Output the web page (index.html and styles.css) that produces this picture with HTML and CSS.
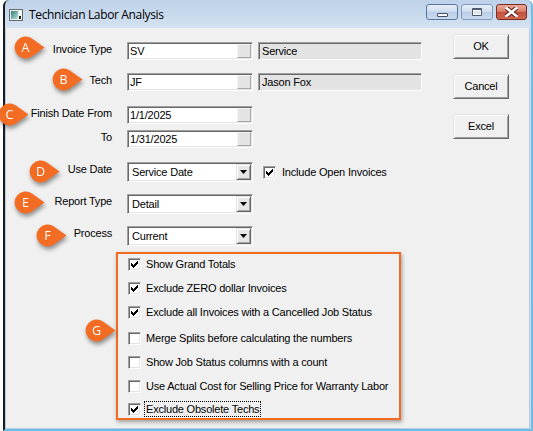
FILE: index.html
```html
<!DOCTYPE html>
<html>
<head>
<meta charset="utf-8">
<title>Technician Labor Analysis</title>
<link rel="stylesheet" href="styles.css">
</head>
<body>
<div class="window">
  <div class="titlebar">
    <svg class="app-icon" width="14" height="12" viewBox="0 0 14 12">
      <defs>
        <linearGradient id="ig" x1="0" y1="0" x2="1" y2="1">
          <stop offset="0" stop-color="#2f7f74"/>
          <stop offset="1" stop-color="#bfe3d9"/>
        </linearGradient>
      </defs>
      <rect x="0.5" y="0.5" width="13" height="11" fill="#e8eef4" stroke="#6b6b6b"/>
      <rect x="2" y="2" width="7" height="8" fill="url(#ig)"/>
      <rect x="10" y="2" width="2" height="5" fill="#ffffff"/>
      <rect x="10" y="7" width="2" height="3" fill="#202020"/>
    </svg>
    <span class="title">Technician Labor Analysis</span>
    <div class="caption-buttons">
      <span class="cbtn cmin"><i class="glyph-min"></i></span>
      <span class="cbtn cmax"><i class="glyph-max"></i></span>
      <span class="cbtn cclose">
        <svg width="13" height="10" viewBox="0 0 13 10">
          <path d="M1.5 1 L11.5 9 M11.5 1 L1.5 9" stroke="#5a1a12" stroke-width="4.5" stroke-linecap="square"/>
          <path d="M1.5 1 L11.5 9 M11.5 1 L1.5 9" stroke="#ffffff" stroke-width="2.5" stroke-linecap="square"/>
        </svg>
      </span>
    </div>
  </div>
  <div class="client">
    <div class="form">
      <div class="row r-invoice">
        <span class="lbl">Invoice Type</span>
        <div class="edit"><span class="txt">SV</span><span class="ell"></span></div>
        <div class="desc">Service</div>
      </div>
      <div class="row r-tech">
        <span class="lbl">Tech</span>
        <div class="edit"><span class="txt">JF</span><span class="ell"></span></div>
        <div class="desc">Jason Fox</div>
      </div>
      <div class="row r-from">
        <span class="lbl">Finish Date From</span>
        <div class="edit"><span class="txt">1/1/2025</span><span class="ell"></span></div>
      </div>
      <div class="row r-to">
        <span class="lbl">To</span>
        <div class="edit"><span class="txt">1/31/2025</span><span class="ell"></span></div>
      </div>
      <div class="row r-combo r-usedate">
        <span class="lbl">Use Date</span>
        <div class="combo"><span class="txt">Service Date</span><span class="arrow"><svg width="7" height="4" viewBox="0 0 7 4"><path d="M0 0h7L3.5 4z" fill="#000"/></svg></span></div>
        <div class="inline-check">
          <span class="cb"><svg viewBox="0 0 9 9" width="9" height="9"><path class="tick" d="M7 1h1v1h-1z M6 2h2v1h-2z M1 3h1v1h-1z M5 3h3v1h-3z M1 4h2v1h-2z M4 4h3v1h-3z M1 5h5v1h-5z M2 6h3v1h-3z M3 7h1v1h-1z"/></svg></span>
          <span class="cb-text">Include Open Invoices</span>
        </div>
      </div>
      <div class="row r-combo r-report">
        <span class="lbl">Report Type</span>
        <div class="combo"><span class="txt">Detail</span><span class="arrow"><svg width="7" height="4" viewBox="0 0 7 4"><path d="M0 0h7L3.5 4z" fill="#000"/></svg></span></div>
      </div>
      <div class="row r-combo r-process">
        <span class="lbl">Process</span>
        <div class="combo"><span class="txt">Current</span><span class="arrow"><svg width="7" height="4" viewBox="0 0 7 4"><path d="M0 0h7L3.5 4z" fill="#000"/></svg></span></div>
      </div>
      <div class="options">
        <div class="opt"><span class="cb"><svg viewBox="0 0 9 9" width="9" height="9"><path class="tick" d="M7 1h1v1h-1z M6 2h2v1h-2z M1 3h1v1h-1z M5 3h3v1h-3z M1 4h2v1h-2z M4 4h3v1h-3z M1 5h5v1h-5z M2 6h3v1h-3z M3 7h1v1h-1z"/></svg></span><span class="opt-text">Show Grand Totals</span></div>
        <div class="opt"><span class="cb"><svg viewBox="0 0 9 9" width="9" height="9"><path class="tick" d="M7 1h1v1h-1z M6 2h2v1h-2z M1 3h1v1h-1z M5 3h3v1h-3z M1 4h2v1h-2z M4 4h3v1h-3z M1 5h5v1h-5z M2 6h3v1h-3z M3 7h1v1h-1z"/></svg></span><span class="opt-text">Exclude ZERO dollar Invoices</span></div>
        <div class="opt"><span class="cb"><svg viewBox="0 0 9 9" width="9" height="9"><path class="tick" d="M7 1h1v1h-1z M6 2h2v1h-2z M1 3h1v1h-1z M5 3h3v1h-3z M1 4h2v1h-2z M4 4h3v1h-3z M1 5h5v1h-5z M2 6h3v1h-3z M3 7h1v1h-1z"/></svg></span><span class="opt-text">Exclude all Invoices with a Cancelled Job Status</span></div>
        <div class="opt opt-gap"><span class="cb"></span><span class="opt-text">Merge Splits before calculating the numbers</span></div>
        <div class="opt"><span class="cb"></span><span class="opt-text">Show Job Status columns with a count</span></div>
        <div class="opt"><span class="cb"></span><span class="opt-text">Use Actual Cost for Selling Price for Warranty Labor</span></div>
        <div class="opt opt-last"><span class="cb"><svg viewBox="0 0 9 9" width="9" height="9"><path class="tick" d="M7 1h1v1h-1z M6 2h2v1h-2z M1 3h1v1h-1z M5 3h3v1h-3z M1 4h2v1h-2z M4 4h3v1h-3z M1 5h5v1h-5z M2 6h3v1h-3z M3 7h1v1h-1z"/></svg></span><span class="opt-text focus">Exclude Obsolete Techs</span></div>
      </div>
    </div>
    <div class="buttons">
      <button class="btn">OK</button>
      <button class="btn">Cancel</button>
      <button class="btn">Excel</button>
    </div>
  </div>
</div>

<div class="callouts">
  <svg class="badge b-a" width="31" height="23" viewBox="0 0 31 23"><path d="M17.9 2.5 A11 11 0 1 0 17.9 20.5 L30.5 11.5 Z"/><text x="11.5" y="16">A</text></svg>
  <svg class="badge b-b" width="31" height="23" viewBox="0 0 31 23"><path d="M17.9 2.5 A11 11 0 1 0 17.9 20.5 L30.5 11.5 Z"/><text x="11.5" y="16">B</text></svg>
  <svg class="badge b-c" width="31" height="23" viewBox="0 0 31 23"><path d="M17.9 2.5 A11 11 0 1 0 17.9 20.5 L30.5 11.5 Z"/><text x="11.5" y="16">C</text></svg>
  <svg class="badge b-d" width="31" height="23" viewBox="0 0 31 23"><path d="M17.9 2.5 A11 11 0 1 0 17.9 20.5 L30.5 11.5 Z"/><text x="11.5" y="16">D</text></svg>
  <svg class="badge b-e" width="31" height="23" viewBox="0 0 31 23"><path d="M17.9 2.5 A11 11 0 1 0 17.9 20.5 L30.5 11.5 Z"/><text x="11.5" y="16">E</text></svg>
  <svg class="badge b-f" width="31" height="23" viewBox="0 0 31 23"><path d="M17.9 2.5 A11 11 0 1 0 17.9 20.5 L30.5 11.5 Z"/><text x="11.5" y="16">F</text></svg>
  <svg class="badge b-g" width="31" height="23" viewBox="0 0 31 23"><path d="M17.9 2.5 A11 11 0 1 0 17.9 20.5 L30.5 11.5 Z"/><text x="11.5" y="16">G</text></svg>
</div>
</body>
</html>
```
FILE: styles.css
```css
* { box-sizing: border-box; }
html, body { margin: 0; padding: 0; }
body {
  width: 533px;
  height: 431px;
  overflow: hidden;
  position: relative;
  background: #ffffff;
  font-family: "Liberation Sans", Arial, sans-serif;
  font-size: 11px;
  letter-spacing: -0.2px;
  color: #000;
}

/* window frame */
.window {
  margin-left: 3px;
  width: 530px;
  height: 431px;
  display: flex;
  flex-direction: column;
  border-left: 2px solid #1c1c1c;
  border-right: 2px solid #6dbde6;
  border-bottom: 2px solid #6dbde6;
  border-radius: 6px 6px 0 0;
  background: linear-gradient(#bdd1e9, #d3e1f0 27px, #c9dbee);
}
.titlebar {
  height: 27px;
  flex: none;
  display: flex;
  align-items: center;
  padding: 2px 4px 0 4px;
}
.app-icon { flex: none; }
.title {
  margin-left: 6px;
  font-family: "Open Sans", "Noto Sans", sans-serif;
  font-size: 12px;
  letter-spacing: -0.35px;
  color: #000;
}
.caption-buttons {
  margin-left: auto;
  align-self: flex-start;
  margin-top: 2px;
  display: flex;
  gap: 3px;
}
.cbtn {
  height: 16px;
  border-radius: 3px;
  display: flex;
  align-items: center;
  justify-content: center;
}
.cmin, .cmax {
  width: 32px;
  border: 1px solid #7f99bb;
  background: linear-gradient(#e6eef8 0%, #d2dff0 45%, #bccfe7 50%, #c9daee 100%);
}
.cmin { border-color: #56759d; }
.glyph-min {
  display: block;
  width: 11px;
  height: 4px;
  margin-top: 6px;
  background: #ffffff;
  border: 1px solid #3d4f66;
  border-radius: 1px;
}
.glyph-max {
  display: block;
  width: 10px;
  height: 8px;
  border: 1px solid #4a5a70;
  border-top-width: 2px;
  border-radius: 1px;
  background: #dde6f1;
  box-shadow: inset 0 0 0 1px #ffffff;
}
.cclose {
  width: 31px;
  border: 1px solid #7a2b22;
  background: linear-gradient(#e9a996 0%, #d9806c 45%, #c4503c 52%, #d0674f 100%);
}

/* client area */
.client {
  flex: 1;
  display: flex;
  margin-right: 1px;
  background: #f0f0f0;
  border: 1px solid #b7cbe2;
  border-top-color: #d4e0ee;
}
.form {
  width: 441px;
  flex: none;
  padding-top: 14px;
}
.row {
  display: flex;
  align-items: flex-start;
}
.lbl {
  width: 106px;
  flex: none;
  margin-right: 15px;
  padding-top: 1px;
  text-align: right;
  white-space: nowrap;
  line-height: 13px;
}
.r-tech { margin-top: 13px; }
.r-from { margin-top: 15px; }
.r-to { margin-top: 6px; }
.r-usedate { margin-top: 14px; }
.r-report, .r-process { margin-top: 12px; }

.edit, .combo, .desc {
  border: 1px solid;
  border-color: #a0a0a0 #ffffff #ffffff #a0a0a0;
  box-shadow: inset 1px 1px #696969, inset -1px -1px #e3e3e3;
  padding: 1px;
}
.edit {
  width: 126px;
  height: 18px;
  display: flex;
  background: #ffffff;
}
.edit .txt {
  flex: 1;
  padding: 1px 0 0 1px;
  line-height: 13px;
  white-space: nowrap;
}
.ell {
  width: 14px;
  flex: none;
  background: #e4e4e4;
  border: 1px solid;
  border-color: #f6f6f6 #a9a9a9 #a9a9a9 #f6f6f6;
}
.desc {
  width: 164px;
  height: 18px;
  margin-left: 5px;
  background: #e3e3e3;
  padding: 2px 0 0 3px;
  line-height: 13px;
  white-space: nowrap;
}
.combo {
  width: 126px;
  height: 20px;
  display: flex;
  background: #ffffff;
}
.combo .txt {
  flex: 1;
  padding-left: 3px;
  line-height: 16px;
  white-space: nowrap;
}
.arrow {
  width: 15px;
  flex: none;
  display: flex;
  align-items: center;
  justify-content: center;
  background: #e6e6e6;
  border: 1px solid;
  border-color: #e3e3e3 #696969 #696969 #e3e3e3;
  box-shadow: inset 1px 1px #ffffff, inset -1px -1px #a0a0a0;
}
.arrow svg { display: block; }

.inline-check {
  display: flex;
  align-items: center;
  height: 20px;
  margin-left: 10px;
}
.cb {
  width: 13px;
  height: 13px;
  flex: none;
  display: block;
  background: #ffffff;
  border: 1px solid;
  border-color: #a0a0a0 #ffffff #ffffff #a0a0a0;
  box-shadow: inset 1px 1px #696969, inset -1px -1px #e3e3e3;
  padding: 1px;
}
.cb svg { display: block; }
.tick { fill: #000; }
.cb-text {
  margin-left: 6px;
  white-space: nowrap;
  line-height: 13px;
}

/* highlighted options group */
.options {
  margin-top: 6px;
  margin-left: 110px;
  width: 285px;
  height: 168px;
  border: 2px solid #f26b23;
  box-shadow: 1px 2px 4px rgba(0, 0, 0, 0.35);
  padding-left: 10px;
  position: relative;
}
.opt {
  height: 20px;
  display: flex;
  align-items: center;
  margin-top: 4px;
}
.opt:first-child { margin-top: 0; }
.opt-gap { margin-top: 6px; }
.opt-last { margin-top: 3px; }
.opt-text {
  margin-left: 3px;
  padding: 0 1px;
  border: 1px solid transparent;
  line-height: 14px;
  white-space: nowrap;
}
.opt-text.focus { border: 1px dotted #000; }

/* buttons */
.buttons {
  margin-left: 6px;
  padding-top: 6px;
  display: flex;
  flex-direction: column;
  gap: 15px;
}
.btn {
  width: 56px;
  height: 25px;
  margin: 0;
  padding: 0 0 2px 0;
  font: inherit;
  letter-spacing: inherit;
  color: #000;
  background: #f0f0f0;
  border: 1px solid;
  border-color: #e3e3e3 #696969 #696969 #e3e3e3;
  box-shadow: inset 1px 1px #ffffff, inset -1px -1px #a0a0a0;
  border-radius: 0;
  line-height: 20px;
  text-align: center;
}

/* numbered callout badges (annotation overlay) */
.callouts { position: absolute; left: 0; top: 0; }
.badge {
  position: absolute;
  overflow: visible;
  filter: drop-shadow(1px 3px 2px rgba(0, 0, 0, 0.4));
}
.badge path { fill: #f36c24; }
.badge text {
  fill: #ffffff;
  font-family: "Open Sans", "Noto Sans", sans-serif;
  font-size: 12.5px;
  letter-spacing: 0;
  text-anchor: middle;
}
.b-a { left: 14px; top: 36px; }
.b-b { left: 52px; top: 68px; }
.b-c { left: -2px; top: 103px; }
.b-d { left: 29px; top: 160px; }
.b-e { left: 14px; top: 191px; }
.b-f { left: 36px; top: 224px; }
.b-g { left: 85px; top: 319px; }
```
